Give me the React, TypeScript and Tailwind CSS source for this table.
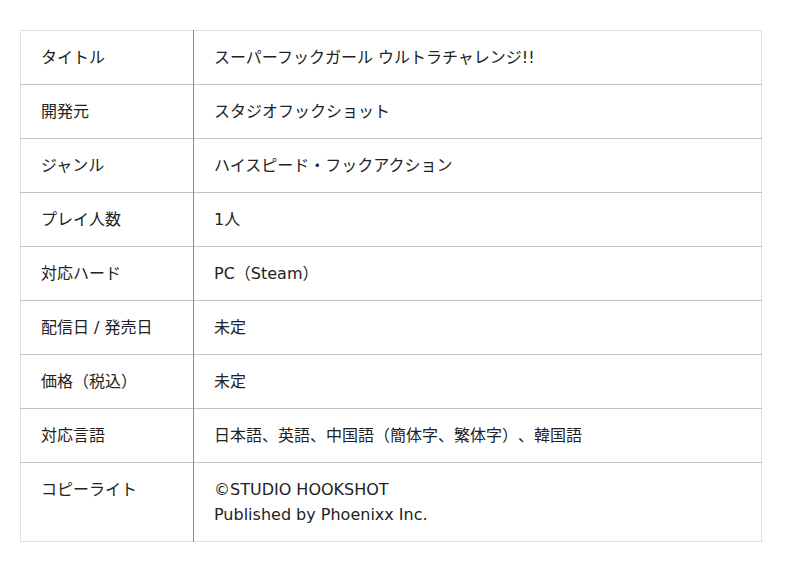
import React from 'react';

const rows: { label: string; value: React.ReactNode }[] = [
  { label: 'タイトル', value: 'スーパーフックガール ウルトラチャレンジ!!' },
  { label: '開発元', value: 'スタジオフックショット' },
  { label: 'ジャンル', value: 'ハイスピード・フックアクション' },
  { label: 'プレイ人数', value: '1人' },
  { label: '対応ハード', value: 'PC（Steam）' },
  { label: '配信日 / 発売日', value: '未定' },
  { label: '価格（税込）', value: '未定' },
  { label: '対応言語', value: '日本語、英語、中国語（簡体字、繁体字）、韓国語' },
  {
    label: 'コピーライト',
    value: (
      <>
        ©STUDIO HOOKSHOT
        <br />
        Published by Phoenixx Inc.
      </>
    ),
  },
];

const App: React.FC = () => {
  return (
    <div
      className="bg-white w-[800px] h-[572px] pt-[30px] px-[20px] text-[#222] [text-spacing-trim:space-all]"
      style={{ fontFamily: '"DejaVu Sans", "Noto Sans CJK JP", sans-serif' }}
    >
      <table className="w-[742px] border-collapse border border-[#e0e0e0] text-[16px] leading-[25px]">
        <tbody>
          {rows.map((row, i) => (
            <tr key={i} className={i < rows.length - 1 ? 'border-b border-[#c4c4c4]' : ''}>
              <td className="w-[173px] align-top px-[20px] py-[14px] border-r border-[#8a8a8a]">
                {row.label}
              </td>
              <td className="align-top px-[20px] py-[14px]">{row.value}</td>
            </tr>
          ))}
        </tbody>
      </table>
    </div>
  );
};

export default App;
